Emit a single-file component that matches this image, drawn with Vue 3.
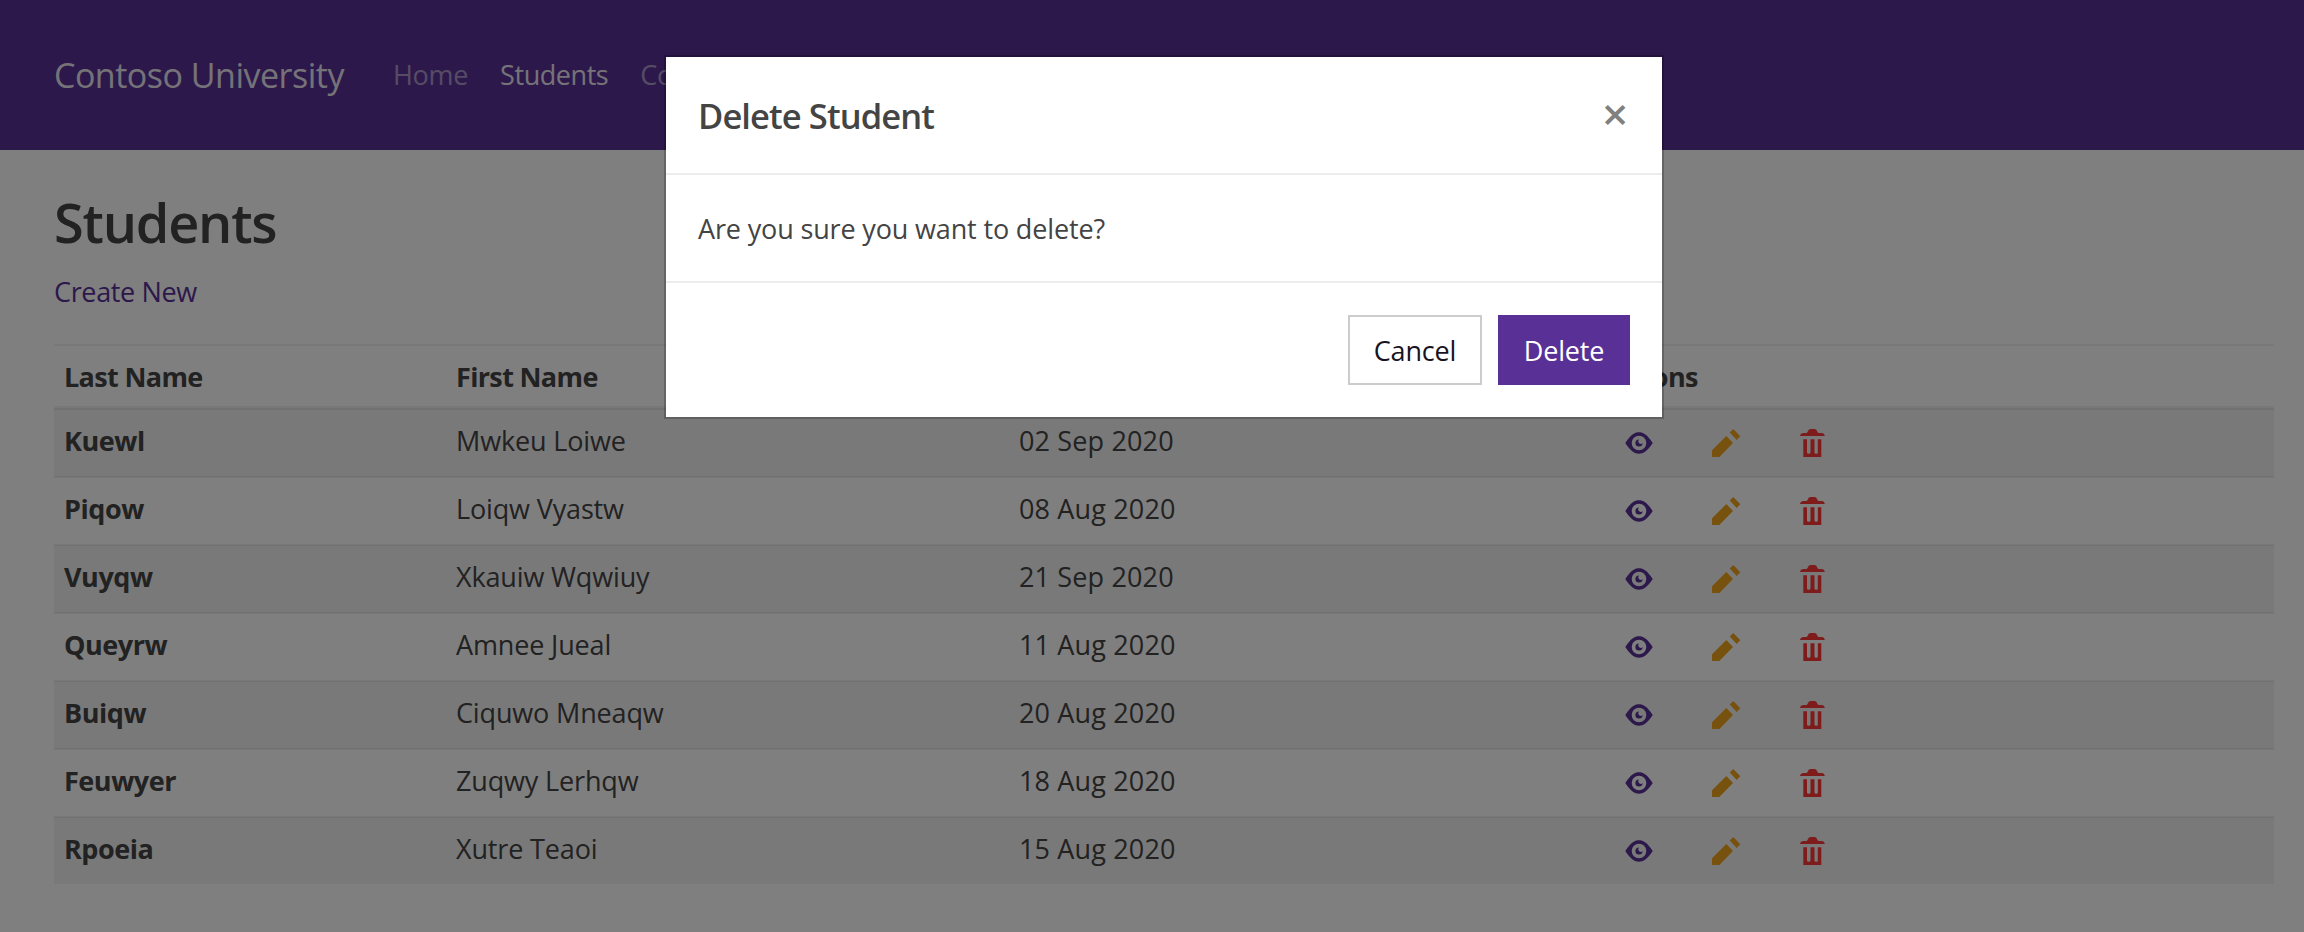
<script setup>
const students = [
  { last: 'Kuewl', first: 'Mwkeu Loiwe', date: '02 Sep 2020' },
  { last: 'Piqow', first: 'Loiqw Vyastw', date: '08 Aug 2020' },
  { last: 'Vuyqw', first: 'Xkauiw Wqwiuy', date: '21 Sep 2020' },
  { last: 'Queyrw', first: 'Amnee Jueal', date: '11 Aug 2020' },
  { last: 'Buiqw', first: 'Ciquwo Mneaqw', date: '20 Aug 2020' },
  { last: 'Feuwyer', first: 'Zuqwy Lerhqw', date: '18 Aug 2020' },
  { last: 'Rpoeia', first: 'Xutre Teaoi', date: '15 Aug 2020' },
]
</script>

<template>
  <div class="page">
    <nav class="navbar">
      <a class="brand">Contoso University</a>
      <a class="nav-link">Home</a>
      <a class="nav-link active">Students</a>
      <a class="nav-link">Courses</a>
    </nav>
    <main class="container">
      <h1>Students</h1>
      <a class="create">Create New</a>
      <div class="table">
        <div class="row head">
          <span>Last Name</span><span>First Name</span><span>Enrollment Date</span><span>Actions</span>
        </div>
        <div v-for="s in students" :key="s.last" class="row">
          <span class="last">{{ s.last }}</span>
          <span>{{ s.first }}</span>
          <span class="date">{{ s.date }}</span>
          <span class="actions">
            <svg class="eye" viewBox="0 0 28 22" width="28" height="22">
              <path fill-rule="evenodd" d="M14 .3C18.500.3 22 2.500 27.700 11C22 19.500 18.500 21.700 14 21.700S6 19.500.3 11C6 2.500 9.500.3 14 .3ZM14 3.700a7.300 7.300 0 1 0 0 14.600a7.300 7.300 0 0 0 0-14.600Z" />
              <path d="M14 7.400a3.600 3.600 0 1 0 3.600 3.600a2.500 2.500 0 0 1-3.600-3.600Z" />
            </svg>
            <svg class="pencil" viewBox="0 0 29 28" width="29" height="28">
              <path d="M21.300 0L28.300 7.300L24.700 11L17.700 3.500ZM14.300 7L21 14L7.300 28H0V21.300Z" />
            </svg>
            <svg class="trash" viewBox="0 0 25 28" width="25" height="28">
              <path d="M0 7C.3 5 1.500 4.300 3.500 4H6.500C8 3.300 8 0 10.500 0H14.500C17 0 17 3.300 18.500 4H21.500C23.500 4.300 24.500 5 24.800 7ZM3.300 10.300H7V23.500Q7 24.800 8.700 24.800T10.500 23.500V10.300H14.500V23.500Q14.500 24.800 16.200 24.800T17.800 23.500V10.300H21.300V28H3.300Z" />
            </svg>
          </span>
        </div>
      </div>
    </main>
    <div class="backdrop">
      <div class="modal">
        <div class="modal-header">
          <h5>Delete Student</h5>
          <span class="close">×</span>
        </div>
        <div class="modal-body">Are you sure you want to delete?</div>
        <div class="modal-footer">
          <button class="btn cancel">Cancel</button>
          <button class="btn delete">Delete</button>
        </div>
      </div>
    </div>
  </div>
</template>

<style>
html, body { margin: 0; overflow: hidden; }
</style>

<style scoped>
* { box-sizing: border-box; }
.page {
  position: relative;
  height: 932px;
  overflow: hidden;
  background: #fff;
  color: #444;
  font-family: "Open Sans", "Noto Sans", sans-serif;
  font-size: 27px;
  line-height: 42px;
  letter-spacing: -0.15px;
}
.navbar { display: flex; align-items: flex-start; height: 150px; padding: 52px 54px 0; background: #593196; }
.brand { width: 339px; color: rgba(255, 255, 255, .9); font-size: 34px; line-height: 46px; letter-spacing: -.5px; }
.nav-link { margin: 2px 32px 0 0; color: rgba(255, 255, 255, .5); letter-spacing: -.3px; }
.nav-link.active { color: rgba(255, 255, 255, .9); letter-spacing: -.45px; }
.container { padding: 0 30px 0 54px; }
h1 { margin: 0; padding-top: 39px; font-size: 54px; line-height: 67px; font-weight: 600; letter-spacing: -1.2px; }
.create { display: block; padding-top: 15px; color: #593196; letter-spacing: -.35px; }
.table { margin-top: 31px; }
.row {
  display: grid;
  grid-template-columns: 392px 563px 583px 1fr;
  height: 68px;
  padding: 10px 0 0 10px;
  border-top: 2px solid rgba(0, 0, 0, .06);
}
.row:nth-child(even) {
  background: linear-gradient(transparent 1px, rgba(0, 0, 0, .05) 1px) border-box;
  box-shadow: 0 1px 0 rgba(0, 0, 0, .05);
}
.row:nth-child(2) { background: rgba(0, 0, 0, .05); }
.row:last-child { box-shadow: none; }
.row.head { height: 64px; border-bottom: 2px solid rgba(0, 0, 0, .06); font-weight: 700; letter-spacing: -.65px; }
.last { font-weight: 700; letter-spacing: -.45px; }
.date { letter-spacing: .15px; }
.actions { display: flex; align-items: flex-start; }
.actions svg { flex: none; }
.eye { fill: #593196; margin: 12px 0 0 23px; }
.pencil { fill: #efa31d; margin: 9px 0 0 59px; }
.trash { fill: #fc3939; margin: 9px 0 0 59px; }
.backdrop { position: absolute; inset: 0; padding: 55px 0 0 664px; background: rgba(0, 0, 0, .5); }
.modal { width: 1000px; height: 364px; border: 2px solid rgba(0, 0, 0, .2); background: #fff; background-clip: padding-box; }
.modal-header { display: flex; justify-content: space-between; height: 118px; padding: 32px 32px 0; border-bottom: 2px solid #ededed; }
h5 { margin: 0; font-size: 34.500px; line-height: 53px; font-weight: 600; letter-spacing: -.9px; }
.close { width: 30px; color: #808080; font-size: 46px; line-height: 49px; font-weight: 600; text-align: center; }
.modal-body { height: 108px; padding: 33px 32px; border-bottom: 2px solid #ededed; }
.modal-footer { display: flex; justify-content: flex-end; gap: 16px; padding: 32px; }
.btn { width: 134px; height: 70px; padding: 2px 0 0; border: 2px solid #ccc; background: #fff; color: #17141f; font: inherit; letter-spacing: inherit; }
.btn.delete { width: 132px; border-color: #593196; background: #593196; color: #fff; }
</style>
